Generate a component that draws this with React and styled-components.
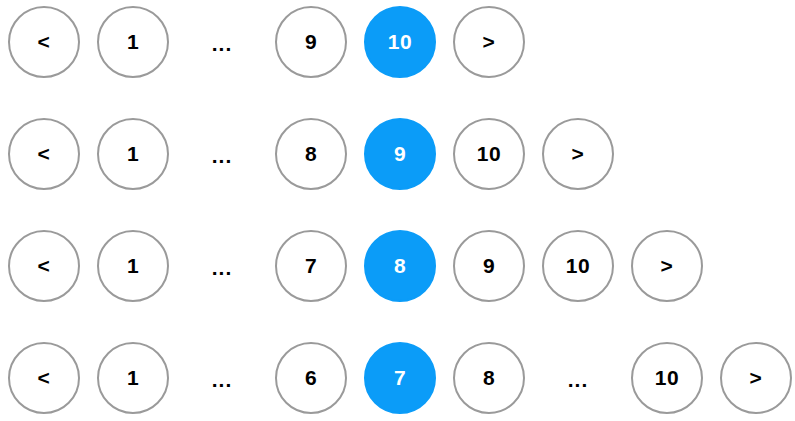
import React from "react";
import styled, { createGlobalStyle } from "styled-components";

const Global = createGlobalStyle`
  html, body { margin: 0; padding: 0; background: #ffffff; }
  body { font-family: "Liberation Sans", Arial, Helvetica, sans-serif; }
`;

const Page = styled.div`
  display: flex;
  flex-direction: column;
  gap: 40px;
  padding: 6px 8px;
`;

const Row = styled.nav`
  display: flex;
  align-items: center;
  gap: 17px;
`;

const Item = styled.button`
  box-sizing: border-box;
  width: 72px;
  height: 72px;
  border-radius: 50%;
  border: 2px solid ${(p) => (p.$active ? "#0b9cf8" : "#9a9a9a")};
  background: ${(p) => (p.$active ? "#0b9cf8" : "#ffffff")};
  color: ${(p) => (p.$active ? "#ffffff" : "#000000")};
  font-family: "Liberation Sans", Arial, Helvetica, sans-serif;
  font-size: 21px;
  font-weight: 700;
  letter-spacing: 0.5px;
  display: flex;
  align-items: center;
  justify-content: center;
  padding: 0;
  cursor: pointer;
  flex: none;
`;

const Gap = styled.span`
  width: 72px;
  height: 72px;
  display: flex;
  align-items: center;
  justify-content: center;
  font-size: 21px;
  font-weight: 700;
  letter-spacing: 1px;
  color: #000;
  flex: none;
  padding-top: 4px;
  box-sizing: border-box;
`;

const rows = [
  { current: 10, items: ["<", 1, "...", 9, 10, ">"] },
  { current: 9, items: ["<", 1, "...", 8, 9, 10, ">"] },
  { current: 8, items: ["<", 1, "...", 7, 8, 9, 10, ">"] },
  { current: 7, items: ["<", 1, "...", 6, 7, 8, "...", 10, ">"] },
];

export default function App() {
  return (
    <>
      <Global />
      <Page>
        {rows.map((r, ri) => (
          <Row key={ri}>
            {r.items.map((it, i) =>
              it === "..." ? (
                <Gap key={i}>...</Gap>
              ) : (
                <Item key={i} $active={it === r.current}>
                  {it}
                </Item>
              )
            )}
          </Row>
        ))}
      </Page>
    </>
  );
}
